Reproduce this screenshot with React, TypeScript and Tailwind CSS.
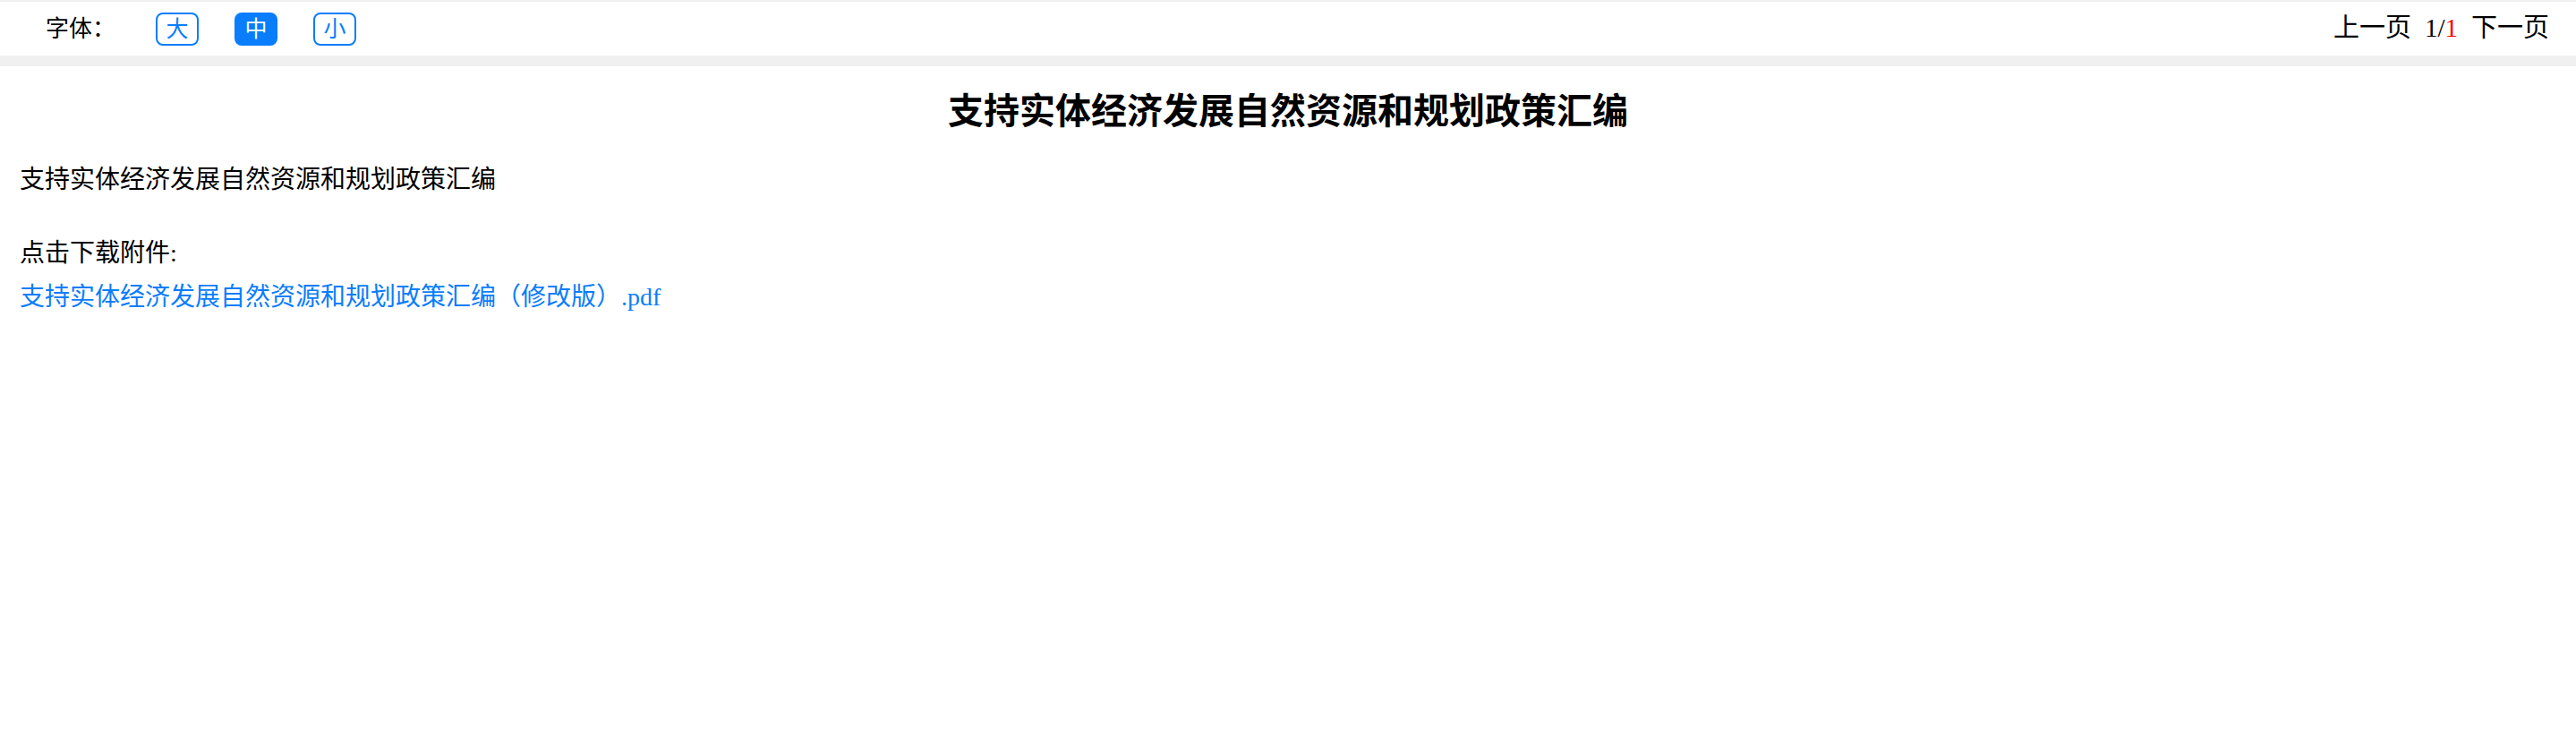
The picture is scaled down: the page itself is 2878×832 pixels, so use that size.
const fontStack = 'font-["Liberation_Serif","Noto_Sans_CJK_SC",serif]'

const sizes = ['大', '中', '小']

export default function App() {
  const active = '中'

  return (
    <div className={`min-h-screen bg-white text-black ${fontStack}`}>
      {/* Top toolbar */}
      <div className="h-[2px] bg-[#f0f0f0]" />
      <div className="flex h-[60px] items-center justify-between pl-[51px] pr-[30px]">
        <div className="flex items-center">
          <span className="w-[123px] text-[26px]">字体：</span>
          <div className="flex gap-[40px]">
            {sizes.map((s) => (
              <button
                key={s}
                className={`flex h-[37px] w-[48px] items-center justify-center rounded-[8px] border-2 border-[#0a7dfc] text-[25px] leading-none ${
                  s === active ? 'bg-[#0a7dfc] text-white' : 'bg-white text-[#0a7dfc]'
                }`}
              >
                {s}
              </button>
            ))}
          </div>
        </div>
        <div className="flex items-center text-[29px]">
          <span>上一页</span>
          <span className="ml-[15px]">
            1/<span className="text-[#ff0000]">1</span>
          </span>
          <span className="ml-[15px]">下一页</span>
        </div>
      </div>
      <div className="h-[12px] bg-[#f0f0f0]" />

      {/* Article */}
      <h1 className="mt-[22px] text-center text-[40px] font-bold leading-[57px]">
        支持实体经济发展自然资源和规划政策汇编
      </h1>
      <div className="px-[22px] text-[28px] leading-[49px]">
        <p className="mt-[23px]">支持实体经济发展自然资源和规划政策汇编</p>
        <p className="mt-[33px]">点击下载附件:</p>
        <p>
          <a href="#" className="text-[#0a7dfc]">
            支持实体经济发展自然资源和规划政策汇编（修改版）.pdf
          </a>
        </p>
      </div>
    </div>
  )
}
